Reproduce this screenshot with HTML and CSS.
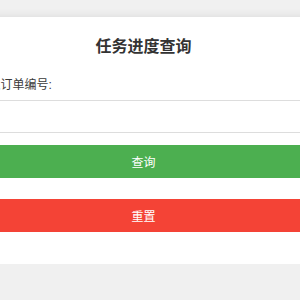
FILE: index.html
```html
<!DOCTYPE html>
<html lang="zh-CN">
<head>
    <meta charset="UTF-8">
    <meta name="viewport" content="width=device-width, initial-scale=1.0">
    <title>任务进度查询</title>
    <link rel="stylesheet" href="styles.css">
</head>
<body>
    <div class="page">
        <div class="container">
            <h1>任务进度查询</h1>
            <label for="orderId">请输入订单编号:</label>
            <input type="text" id="orderId">
            <button id="query" class="btn btn-query">查询</button>
            <button id="reset" class="btn btn-reset">重置</button>
        </div>
    </div>
</body>
</html>
```

FILE: styles.css
```css
* {
    box-sizing: border-box;
    margin: 0;
    padding: 0;
}

body {
    font-family: "Liberation Sans", "Noto Sans CJK SC", sans-serif;
    background-color: #f0f0f0;
    color: #333;
    padding-top: 17px;
    overflow: hidden;
}

.page {
    width: 287px;
    display: flex;
    justify-content: center;
}

.container {
    flex-shrink: 0;
    width: 406px;
    padding: 20px 24px 32px;
    background-color: #fff;
    border-radius: 8px;
    box-shadow: 0 0 10px rgba(0, 0, 0, 0.1);
    display: flex;
    flex-direction: column;
}

h1 {
    font-size: 16px;
    line-height: 19px;
    text-align: center;
    color: #333;
    margin-bottom: 21px;
}

label {
    font-size: 12px;
    line-height: 16px;
    color: #3a3a3a;
    margin-bottom: 7px;
}

input {
    height: 33px;
    border: 1px solid #ddd;
    border-radius: 4px;
    padding: 0 10px;
    font-size: 12px;
}

.btn {
    height: 33px;
    border: none;
    border-radius: 4px;
    color: #fff;
    font-family: inherit;
    font-size: 12px;
    cursor: pointer;
}

.btn-query {
    background-color: #4caf50;
    margin-top: 12px;
}

.btn-reset {
    background-color: #f44336;
    margin-top: 21px;
}
```
